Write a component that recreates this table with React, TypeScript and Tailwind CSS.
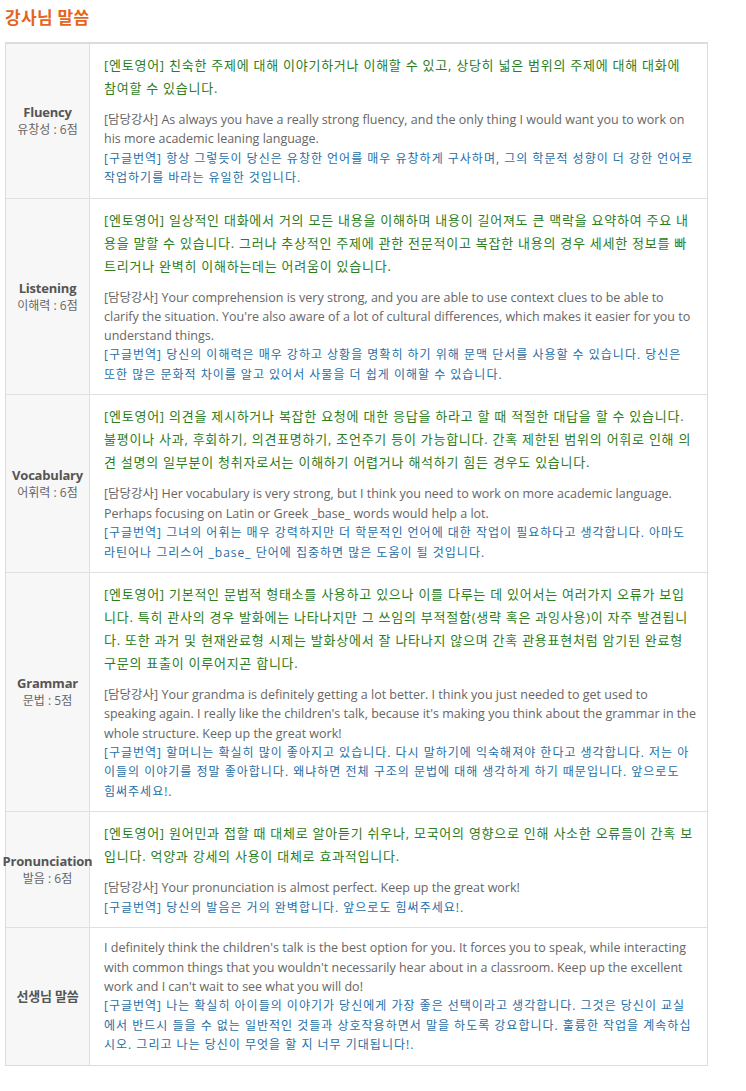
const KR = "font-['Open_Sans','Noto_Sans_CJK_KR',sans-serif]";

type Row = {
  label: string;
  score?: string;
  green?: string[];
  gray: string[];
  blue: string[];
};

const rows: Row[] = [
  {
    label: "Fluency",
    score: "유창성 : 6점",
    green: [
      "[엔토영어] 친숙한 주제에 대해 이야기하거나 이해할 수 있고, 상당히 넓은 범위의 주제에 대해 대화에",
      "참여할 수 있습니다.",
    ],
    gray: [
      "[담당강사] As always you have a really strong fluency, and the only thing I would want you to work on",
      "his more academic leaning language.",
    ],
    blue: [
      "[구글번역] 항상 그렇듯이 당신은 유창한 언어를 매우 유창하게 구사하며, 그의 학문적 성향이 더 강한 언어로",
      "작업하기를 바라는 유일한 것입니다.",
    ],
  },
  {
    label: "Listening",
    score: "이해력 : 6점",
    green: [
      "[엔토영어] 일상적인 대화에서 거의 모든 내용을 이해하며 내용이 길어져도 큰 맥락을 요약하여 주요 내",
      "용을 말할 수 있습니다. 그러나 추상적인 주제에 관한 전문적이고 복잡한 내용의 경우 세세한 정보를 빠",
      "트리거나 완벽히 이해하는데는 어려움이 있습니다.",
    ],
    gray: [
      "[담당강사] Your comprehension is very strong, and you are able to use context clues to be able to",
      "clarify the situation. You're also aware of a lot of cultural differences, which makes it easier for you to",
      "understand things.",
    ],
    blue: [
      "[구글번역] 당신의 이해력은 매우 강하고 상황을 명확히 하기 위해 문맥 단서를 사용할 수 있습니다. 당신은",
      "또한 많은 문화적 차이를 알고 있어서 사물을 더 쉽게 이해할 수 있습니다.",
    ],
  },
  {
    label: "Vocabulary",
    score: "어휘력 : 6점",
    green: [
      "[엔토영어] 의견을 제시하거나 복잡한 요청에 대한 응답을 하라고 할 때 적절한 대답을 할 수 있습니다.",
      "불평이나 사과, 후회하기, 의견표명하기, 조언주기 등이 가능합니다. 간혹 제한된 범위의 어휘로 인해 의",
      "견 설명의 일부분이 청취자로서는 이해하기 어렵거나 해석하기 힘든 경우도 있습니다.",
    ],
    gray: [
      "[담당강사] Her vocabulary is very strong, but I think you need to work on more academic language.",
      "Perhaps focusing on Latin or Greek _base_ words would help a lot.",
    ],
    blue: [
      "[구글번역] 그녀의 어휘는 매우 강력하지만 더 학문적인 언어에 대한 작업이 필요하다고 생각합니다. 아마도",
      "라틴어나 그리스어 _base_ 단어에 집중하면 많은 도움이 될 것입니다.",
    ],
  },
  {
    label: "Grammar",
    score: "문법 : 5점",
    green: [
      "[엔토영어] 기본적인 문법적 형태소를 사용하고 있으나 이를 다루는 데 있어서는 여러가지 오류가 보입",
      "니다. 특히 관사의 경우 발화에는 나타나지만 그 쓰임의 부적절함(생략 혹은 과잉사용)이 자주 발견됩니",
      "다. 또한 과거 및 현재완료형 시제는 발화상에서 잘 나타나지 않으며 간혹 관용표현처럼 암기된 완료형",
      "구문의 표출이 이루어지곤 합니다.",
    ],
    gray: [
      "[담당강사] Your grandma is definitely getting a lot better. I think you just needed to get used to",
      "speaking again. I really like the children's talk, because it's making you think about the grammar in the",
      "whole structure. Keep up the great work!",
    ],
    blue: [
      "[구글번역] 할머니는 확실히 많이 좋아지고 있습니다. 다시 말하기에 익숙해져야 한다고 생각합니다. 저는 아",
      "이들의 이야기를 정말 좋아합니다. 왜냐하면 전체 구조의 문법에 대해 생각하게 하기 때문입니다. 앞으로도",
      "힘써주세요!.",
    ],
  },
  {
    label: "Pronunciation",
    score: "발음 : 6점",
    green: [
      "[엔토영어] 원어민과 접할 때 대체로 알아듣기 쉬우나, 모국어의 영향으로 인해 사소한 오류들이 간혹 보",
      "입니다. 억양과 강세의 사용이 대체로 효과적입니다.",
    ],
    gray: ["[담당강사] Your pronunciation is almost perfect. Keep up the great work!"],
    blue: ["[구글번역] 당신의 발음은 거의 완벽합니다. 앞으로도 힘써주세요!."],
  },
  {
    label: "선생님 말씀",
    gray: [
      "I definitely think the children's talk is the best option for you. It forces you to speak, while interacting",
      "with common things that you wouldn't necessarily hear about in a classroom. Keep up the excellent",
      "work and I can't wait to see what you will do!",
    ],
    blue: [
      "[구글번역] 나는 확실히 아이들의 이야기가 당신에게 가장 좋은 선택이라고 생각합니다. 그것은 당신이 교실",
      "에서 반드시 들을 수 없는 일반적인 것들과 상호작용하면서 말을 하도록 강요합니다. 훌륭한 작업을 계속하십",
      "시오. 그리고 나는 당신이 무엇을 할 지 너무 기대됩니다!.",
    ],
  },
];

function Lines({ lines, className }: { lines: string[]; className: string }) {
  return (
    <div className={className}>
      {lines.map((l, i) => (
        <div key={i} className="whitespace-nowrap">
          {l}
        </div>
      ))}
    </div>
  );
}

export default function App() {
  return (
    <div className={`min-h-screen bg-white ${KR}`}>
      <h2 className="pl-[5px] pt-[6px] text-[17px] leading-[24px] font-bold text-[#e5651c] tracking-[0.3px]">
        강사님 말씀
      </h2>

      {/* score table */}
      <div className="ml-[5px] mt-[12px] w-[703px] border border-t-2 border-[#dcdcdc]">
        {rows.map((r, i) => (
          <div
            key={r.label}
            className={`flex ${i > 0 ? "border-t border-[#e0e0e0]" : ""}`}
          >
            <div className="w-[84px] shrink-0 bg-[#f7f7f7] border-r border-[#e0e0e0] flex flex-col items-center justify-center text-center">
              <div className="text-[13px] font-bold text-[#555] leading-[18px] tracking-[-0.2px]">
                {r.label}
              </div>
              {r.score && (
                <div className="text-[12px] text-[#666] leading-[18px]">{r.score}</div>
              )}
            </div>
            <div className="flex-1 px-[14px] pt-[10px] pb-[10px]">
              {r.green && (
                <Lines
                  lines={r.green}
                  className="mb-[10px] text-[13px] leading-[23px] text-[#2b7d1d] tracking-[0.75px]"
                />
              )}
              <Lines lines={r.gray} className="text-[12.5px] leading-[19.3px] text-[#666]" />
              <Lines lines={r.blue} className="text-[12px] leading-[19.5px] text-[#1f6ea5] tracking-[1px]" />
            </div>
          </div>
        ))}
      </div>
    </div>
  );
}
